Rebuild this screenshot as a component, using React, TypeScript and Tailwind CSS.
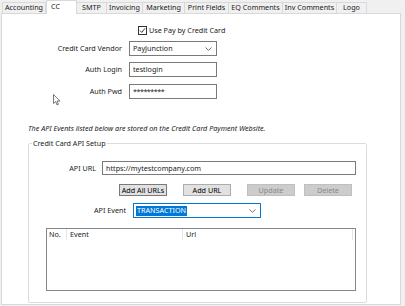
import React from 'react';

const tabs = [
  { label: 'Accounting', w: 'w-[44px]' },
  { label: 'CC', w: 'w-[31px]', active: true },
  { label: 'SMTP', w: 'w-[30px]' },
  { label: 'Invoicing', w: 'w-[36px]' },
  { label: 'Marketing', w: 'w-[42px]' },
  { label: 'Print Fields', w: 'w-[44px]' },
  { label: 'EQ Comments', w: 'w-[54px]' },
  { label: 'Inv Comments', w: 'w-[54px]' },
  { label: 'Logo', w: 'w-[30px]' },
];

const Chevron = () => (
  <svg width="7" height="4" viewBox="0 0 7 4" className="shrink-0">
    <path d="M0.5 0.5 L3.5 3.3 L6.5 0.5" fill="none" stroke="#606060" strokeWidth="0.9" />
  </svg>
);

const FieldRow: React.FC<{ label: string; children: React.ReactNode; className?: string }> = ({
  label,
  children,
  className = '',
}) => (
  <div className={`flex items-center ${className}`}>
    <div className="w-[127px] text-right pr-[7px] leading-none">{label}</div>
    {children}
  </div>
);

const Btn: React.FC<{ label: string; disabled?: boolean; focused?: boolean; className?: string }> = ({
  label,
  disabled,
  focused,
  className = '',
}) => (
  <div
    className={`w-[48px] h-[12px] flex items-center justify-center leading-none border ${
      disabled
        ? 'bg-[#cccccc] border-[#bfbfbf] text-[#8a8a8a]'
        : focused
          ? 'bg-[#e1e1e1] border-[#7a7a7a] text-black'
          : 'bg-[#e1e1e1] border-[#adadad] text-black'
    } ${className}`}
  >
    {label}
  </div>
);

export default function App() {
  return (
    <div
      className="w-[405px] h-[306px] bg-[#f0f0f0] overflow-hidden relative text-[7.2px] text-[#1a1a1a]"
      style={{ fontFamily: '"Noto Sans", "Open Sans", sans-serif' }}
    >
      {/* tab strip */}
      <div className="flex items-end h-[14px] pl-[2px]">
        {tabs.map((t) =>
          t.active ? (
            <div
              key={t.label}
              className={`${t.w} h-[14px] bg-white border border-b-0 border-[#d9d9d9] flex items-start pt-[2px] pl-[4px] leading-none relative z-10`}
            >
              {t.label}
            </div>
          ) : (
            <div
              key={t.label}
              className={`${t.w} h-[12px] bg-[#f0f0f0] border border-l-0 first:border-l border-[#d9d9d9] flex items-center justify-center leading-none`}
            >
              {t.label}
            </div>
          )
        )}
      </div>

      {/* panel */}
      <div className="-mt-px ml-[1px] w-[400px] h-[292px] bg-white border border-[#d9d9d9] flex flex-col">
        <div className="flex items-center mt-[12px] pl-[136px] gap-[1px] leading-none">
          <div className="w-[9px] h-[9px] border border-[#333] flex items-center justify-center">
            <svg width="7" height="7" viewBox="0 0 7 7">
              <path d="M1 3.6 L2.8 5.4 L6 1.3" fill="none" stroke="#222" strokeWidth="0.9" />
            </svg>
          </div>
          <span className="ml-[1px]">Use Pay by Credit Card</span>
        </div>

        <FieldRow label="Credit Card Vendor" className="mt-[6px]">
          <div className="w-[88px] h-[15px] border border-[#7a7a7a] flex items-center justify-between pl-[3px] pr-[4px] leading-none">
            <span>PayJunction</span>
            <Chevron />
          </div>
        </FieldRow>

        <FieldRow label="Auth Login" className="mt-[6px]">
          <div className="w-[88px] h-[15px] border border-[#7a7a7a] flex items-center pl-[3px] leading-none">
            testlogin
          </div>
        </FieldRow>

        <FieldRow label="Auth Pwd" className="mt-[7px]">
          <div className="w-[88px] h-[15px] border border-[#7a7a7a] flex items-center pl-[3px] leading-none tracking-[-0.5px]">
            *********
          </div>
        </FieldRow>

        <div className="mt-[26px] pl-[26px] italic leading-none">
          The API Events listed below are stored on the Credit Card Payment Website.
        </div>

        {/* group box */}
        <fieldset className="mt-[8px] ml-[26px] w-[339px] h-[163px] border border-[#dcdcdc] rounded-[2px] px-0 pb-0 pt-0">
          <legend className="ml-[3px] px-[1px] leading-none">Credit Card API Setup</legend>

          <div className="flex items-center mt-[14px]">
            <div className="w-[73px] text-right pr-[6px] leading-none">API URL</div>
            <div className="w-[254px] h-[14px] border border-[#7a7a7a] flex items-center pl-[3px] leading-none">
              https://mytestcompany.com
            </div>
          </div>

          <div className="flex items-center mt-[9px] pl-[90px]">
            <Btn label="Add All URLs" focused />
            <Btn label="Add URL" className="ml-[16px]" />
            <Btn label="Update" disabled className="ml-[16px]" />
            <Btn label="Delete" disabled className="ml-[9px]" />
          </div>

          <div className="flex items-center mt-[7px]">
            <div className="w-[104px] text-right pr-[7px] leading-none">API Event</div>
            <div className="w-[128px] h-[15px] border border-[#0078d7] flex items-center justify-between pl-[2px] pr-[4px] leading-none">
              <span className="bg-[#0078d7] text-white px-[1px] py-[1px]">TRANSACTION</span>
              <Chevron />
            </div>
          </div>

          <div className="mt-[10px] ml-[17px] w-[310px] h-[63px] border border-[#828790] bg-white">
            <div className="flex h-[11px] items-center leading-none">
              <div className="w-[20px] pl-[2px] border-r border-[#e5e5e5] h-full flex items-center">No.</div>
              <div className="w-[116px] pl-[3px] border-r border-[#e5e5e5] h-full flex items-center">Event</div>
              <div className="w-[170px] pl-[3px] border-r border-[#e5e5e5] h-full flex items-center">Url</div>
            </div>
          </div>
        </fieldset>
      </div>

      {/* mouse cursor */}
      <svg width="8" height="12" viewBox="0 0 8 12" className="absolute left-[53px] top-[94px]">
        <path
          d="M0.5 0.5 L0.5 9.5 L2.6 7.6 L4 10.9 L5.4 10.3 L4 7.1 L7 7.1 Z"
          fill="white"
          stroke="#555"
          strokeWidth="0.8"
          strokeLinejoin="round"
        />
      </svg>
    </div>
  );
}
